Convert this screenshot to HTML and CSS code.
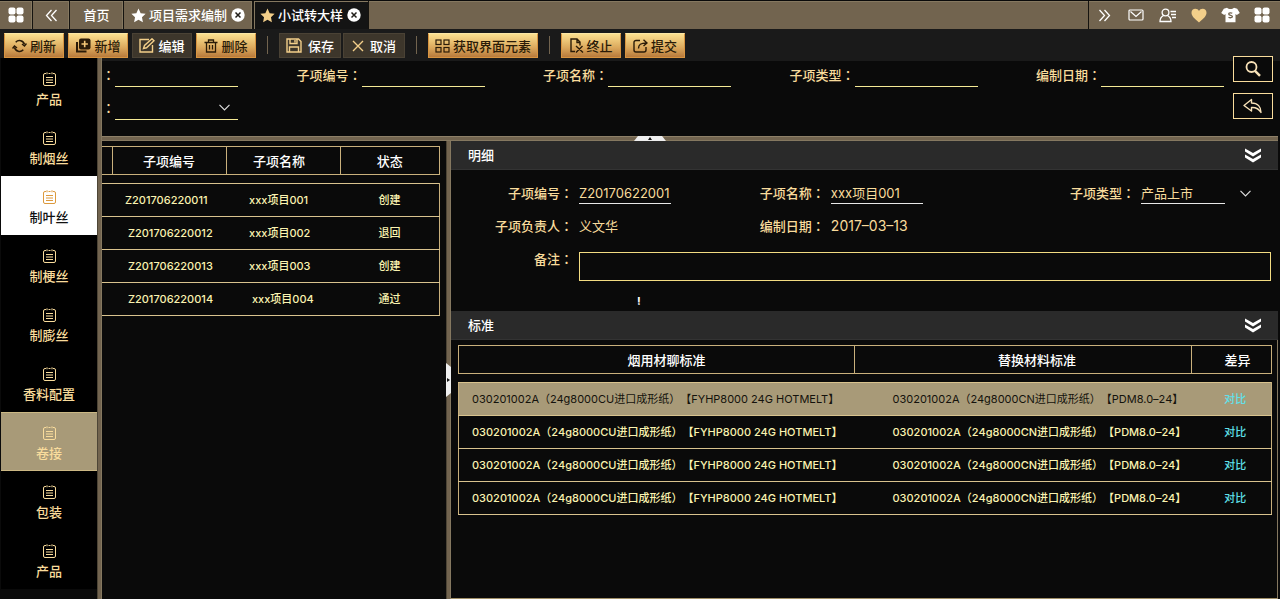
FILE: index.html
```html
<!DOCTYPE html>
<html lang="zh-CN">
<head>
    <meta charset="UTF-8">
    <meta name="viewport" content="width=device-width, initial-scale=1.0">
    <title>小试转大样</title>
    <link rel="stylesheet" href="styles.css">
</head>
<body>
    <!-- shared icons -->
    <svg class="sprite" aria-hidden="true">
        <symbol id="i-grid" viewBox="0 0 16 16"><rect x="0.5" y="0.5" width="7" height="7" rx="2"/><rect x="8.500" y="0.5" width="7" height="7" rx="2"/><rect x="0.5" y="8.500" width="7" height="7" rx="2"/><rect x="8.500" y="8.500" width="7" height="7" rx="2"/></symbol>
        <symbol id="i-star" viewBox="0 0 16 16"><path d="M8 .6l2.300 4.900 5.300.7-3.900 3.700 1 5.300L8 12.600l-4.700 2.600 1-5.300L.4 6.200l5.300-.7z"/></symbol>
        <symbol id="i-close" viewBox="0 0 14 14"><circle cx="7" cy="7" r="6.700" fill="#fff"/><path d="M4.500 4.500l5 5M9.500 4.500l-5 5" stroke="#221f1a" stroke-width="1.500" fill="none"/></symbol>
        <symbol id="i-list" viewBox="0 0 13 14"><path d="M3 1.500H2a1.500 1.500 0 0 0-1.500 1.500v9A1.500 1.500 0 0 0 2 13.500h9a1.500 1.500 0 0 0 1.500-1.500V3A1.500 1.500 0 0 0 11 1.500h-1M5.500 1.500h2M4 .3v2M9 .3v2M3 5.500h7M3 8h7M3 10.500h7" fill="none" stroke="currentColor"/></symbol>
        <symbol id="i-down2" viewBox="0 0 16 15"><path d="M0 0.5L8 5l8-4.500v3L8 8.500 0 3.500zM0 6.500L8 11l8-4.500v3l-8 5-8-5z" fill="#fff"/></symbol>
    </svg>

    <header class="topbar">
        <button class="top-cell cell-menu" aria-label="菜单"><svg width="16" height="16" fill="#fff"><use href="#i-grid"/></svg></button>
        <button class="top-cell cell-back" aria-label="向左"><svg width="13" height="13" viewBox="0 0 13 13" fill="none" stroke="#fff" stroke-width="1.300"><path d="M6.500 1L1.500 6.500l5 5.500M11.500 1l-5 5.500 5 5.500"/></svg></button>
        <button class="top-cell cell-home">首页</button>
        <div class="top-cell tab">
            <svg width="15" height="15" fill="#fff"><use href="#i-star"/></svg>
            <a href="#">项目需求编制</a>
            <button class="tab-close" aria-label="关闭"><svg width="14" height="14"><use href="#i-close"/></svg></button>
        </div>
        <div class="top-cell tab tab-active">
            <svg width="15" height="15" fill="#f3cf8a"><use href="#i-star"/></svg>
            <a href="#">小试转大样</a>
            <button class="tab-close" aria-label="关闭"><svg width="14" height="14"><use href="#i-close"/></svg></button>
        </div>
        <div class="top-icons">
            <button aria-label="向右"><svg width="13" height="13" viewBox="0 0 13 13" fill="none" stroke="#fff" stroke-width="1.300"><path d="M1.500 1l5 5.500-5 5.500M6.500 1l5 5.500-5 5.500"/></svg></button>
            <button aria-label="邮件"><svg width="16" height="12" viewBox="0 0 16 12" fill="none" stroke="#fff" stroke-width="1.200"><rect x="1" y="1" width="14" height="10" rx="1"/><path d="M2.500 2.500L8 7.500l5.500-5"/></svg></button>
            <button aria-label="用户"><svg width="18" height="15" viewBox="0 0 18 15" fill="none" stroke="#fff" stroke-width="1.300"><circle cx="6.500" cy="4.500" r="3.400"/><path d="M4.500 7.500C2.500 8.500 1 10 1 13.500h11c0-3.500-1.500-5-3.500-6M11.500 3.500H17M12 6.500h5M13 9.500h4"/></svg></button>
            <button aria-label="收藏"><svg width="16" height="15" viewBox="0 0 16 15" fill="#f3cf8a"><path d="M8 14.500C3.500 10.500.5 8 .5 4.700.5 2.300 2.200.7 4.300.7 6 .7 7.300 1.600 8 3 8.700 1.600 10 .7 11.700.7c2.100 0 3.800 1.600 3.800 4C15.500 8 12.500 10.500 8 14.500z"/></svg></button>
            <button aria-label="换肤"><svg width="19" height="16" viewBox="0 0 19 16"><path d="M6 .8c1.500 1.600 5.500 1.600 7 0l3.200 1L18.800 6l-3 1.900-1.300-1V15.300h-10V6.900l-1.300 1L.2 6l2.600-4.200z" fill="#fff"/><path d="M11.300 6.300c-1.200-.8-3.600-.6-3.600.7 0 1.700 3.700.9 3.700 2.600 0 1.300-2.500 1.500-3.900.6" fill="none" stroke="#72644f" stroke-width="1.300"/></svg></button>
            <button aria-label="应用"><svg width="16" height="16" fill="#fff"><use href="#i-grid"/></svg></button>
        </div>
    </header>

    <div class="toolbar">
        <button class="btn btn-gold"><svg width="15" height="14" viewBox="0 0 15 14" fill="none" stroke="currentColor" stroke-width="1.500"><path d="M2.500 8.500a5.200 5.200 0 0 0 8.800 2.300M12.500 5.500A5.200 5.200 0 0 0 3.700 3.200"/><path d="M.5 9.500l2-2.500 2.500 2M10 5l2.500 2 2-2.500"/></svg>刷新</button>
        <button class="btn btn-gold"><svg width="16" height="15" viewBox="0 0 16 15"><path d="M2 4v9.500h9.500" fill="none" stroke="currentColor" stroke-width="2"/><rect x="4" y=".5" width="11.500" height="11" rx="2" fill="currentColor"/><path d="M9.700 2.800v6.400M6.500 6h6.400" stroke="#f3c676" stroke-width="1.600"/></svg>新增</button>
        <button class="btn btn-dark"><svg width="16" height="15" viewBox="0 0 16 15" fill="none" stroke="#f3cf8a" stroke-width="1.400"><path d="M10 1.500H1v12.500h12.500V7M4.500 10.500l1-3L13 .8l2 2-7.500 7zM4.500 10.500l3-.7"/></svg>编辑</button>
        <button class="btn btn-gold"><svg width="14" height="14" viewBox="0 0 14 14" fill="none" stroke="currentColor" stroke-width="1.300"><path d="M.5 3.500h13M4.500 3.500V1h5v2.500M2.500 3.500V13h9V3.500M5.500 6v4.500M8.500 6v4.500"/></svg>删除</button>
        <span class="divider"></span>
        <button class="btn btn-dark btn-save"><svg width="16" height="15" viewBox="0 0 16 15" fill="none" stroke="#f3cf8a" stroke-width="1.400"><path d="M1 1h11.500L15 3.500V14H1zM4 1v4.500h7V1M3.500 14V9h9v5M9 2v2.500"/></svg>保存</button>
        <button class="btn btn-dark btn-cancel"><svg width="12" height="12" viewBox="0 0 12 12" stroke="#f3cf8a" stroke-width="1.400"><path d="M1 1l10 10M11 1L1 11"/></svg>取消</button>
        <span class="divider"></span>
        <button class="btn btn-gold"><svg width="15" height="14" viewBox="0 0 15 14" fill="none" stroke="currentColor" stroke-width="1.200"><rect x="1" y="1" width="5" height="4.500"/><rect x="9" y="1" width="5" height="4.500"/><rect x="1" y="8.500" width="5" height="4.500"/><rect x="9" y="8.500" width="5" height="4.500"/></svg>获取界面元素</button>
        <span class="divider"></span>
        <button class="btn btn-gold"><svg width="14" height="15" viewBox="0 0 14 15" fill="none" stroke="currentColor" stroke-width="1.400"><path d="M5 13.500H1V1h6l3 3v3.500M7 1v3.500h3M6 8l7 6.500M12.500 8L6 14.500"/></svg>终止</button>
        <button class="btn btn-gold"><svg width="15" height="14" viewBox="0 0 15 14" fill="none" stroke="currentColor" stroke-width="1.400"><path d="M7 1.500H3a2 2 0 0 0-2 2V11a2 2 0 0 0 2 2h8a2 2 0 0 0 2-2V8M5.500 9.500c0-4 2-5.500 8-5.500M10.500.8L14 4l-3.500 3"/></svg>提交</button>
    </div>

    <div class="page">
        <nav class="sidebar">
            <a href="#" class="side-item"><svg width="13" height="14"><use href="#i-list"/></svg>产品</a>
            <a href="#" class="side-item"><svg width="13" height="14"><use href="#i-list"/></svg>制烟丝</a>
            <a href="#" class="side-item side-white"><svg width="13" height="14"><use href="#i-list"/></svg>制叶丝</a>
            <a href="#" class="side-item"><svg width="13" height="14"><use href="#i-list"/></svg>制梗丝</a>
            <a href="#" class="side-item"><svg width="13" height="14"><use href="#i-list"/></svg>制膨丝</a>
            <a href="#" class="side-item"><svg width="13" height="14"><use href="#i-list"/></svg>香料配置</a>
            <a href="#" class="side-item side-current"><svg width="13" height="14"><use href="#i-list"/></svg>卷接</a>
            <a href="#" class="side-item"><svg width="13" height="14"><use href="#i-list"/></svg>包装</a>
            <a href="#" class="side-item"><svg width="13" height="14"><use href="#i-list"/></svg>产品</a>
        </nav>
        <div class="split-v"></div>

        <main class="main">
            <form class="query">
                <div class="query-fields">
                    <div class="field"><label for="q0"><span class="colon" lang="zh-TW">：</span></label><input type="text" id="q0"></div>
                    <div class="field"><label for="q1">子项编号<span class="colon" lang="zh-TW">：</span></label><input type="text" id="q1"></div>
                    <div class="field"><label for="q2">子项名称<span class="colon" lang="zh-TW">：</span></label><input type="text" id="q2"></div>
                    <div class="field"><label for="q3">子项类型<span class="colon" lang="zh-TW">：</span></label><input type="text" id="q3"></div>
                    <div class="field"><label for="q4">编制日期<span class="colon" lang="zh-TW">：</span></label><input type="text" id="q4"></div>
                    <div class="field"><label for="q5"><span class="colon" lang="zh-TW">：</span></label><select id="q5"><option></option></select></div>
                </div>
                <div class="query-actions">
                    <button type="button" aria-label="查询"><svg width="18" height="18" viewBox="0 0 18 18" fill="none" stroke="#f8e2b8"><circle cx="7.500" cy="7" r="5" stroke-width="1.800"/><path d="M11 10.800l5 5" stroke-width="2.400"/></svg></button>
                    <button type="button" aria-label="返回"><svg width="20" height="16" viewBox="0 0 20 16" fill="none" stroke="#f8e2b8" stroke-width="1.400" stroke-linejoin="round"><path d="M8.500 1.500L1 7.500l7.500 5.500V9.500c4.500-.3 7.500 1.500 9.500 5C18 9 15 5 8.500 5z"/></svg></button>
                </div>
            </form>
            <div class="split-h"><button class="handle-up" aria-label="收起查询"></button></div>

            <div class="work">
                <section class="list-panel">
                    <table class="grid list-grid">
                        <colgroup><col class="c-check"><col class="c-wide"><col class="c-wide"><col></colgroup>
                        <thead>
                            <tr><th></th><th>子项编号</th><th>子项名称</th><th>状态</th></tr>
                        </thead>
                        <tbody>
                            <tr><td></td><td>Z201706220011</td><td>xxx项目001</td><td>创建</td></tr>
                            <tr><td></td><td>&nbsp;Z201706220012</td><td>xxx项目002</td><td>退回</td></tr>
                            <tr><td></td><td>&nbsp;Z201706220013</td><td>xxx项目003</td><td>创建</td></tr>
                            <tr><td></td><td>&nbsp;Z201706220014</td><td>&nbsp;xxx项目004</td><td>通过</td></tr>
                        </tbody>
                    </table>
                </section>
                <div class="split-v"><button class="handle-right" aria-label="展开列表"></button></div>

                <section class="detail-panel">
                    <div class="panel-head"><h2>明细</h2><button aria-label="折叠"><svg width="16" height="15"><use href="#i-down2"/></svg></button></div>
                    <form class="detail">
                        <label for="d1">子项编号<span class="colon" lang="zh-TW">：</span></label>
                        <input type="text" id="d1" value="Z20170622001">
                        <label for="d2">子项名称<span class="colon" lang="zh-TW">：</span></label>
                        <input type="text" id="d2" value="xxx项目001">
                        <label for="d3">子项类型<span class="colon" lang="zh-TW">：</span></label>
                        <div class="select-box">
                            <select id="d3"><option>产品上市</option></select>
                            <svg width="11" height="7" viewBox="0 0 11 7" fill="none" stroke="#ddd" stroke-width="1.200"><path d="M.5.8l5 5 5-5"/></svg>
                        </div>
                        <span class="label">子项负责人<span class="colon" lang="zh-TW">：</span></span>
                        <span class="value">义文华</span>
                        <span class="label">编制日期<span class="colon" lang="zh-TW">：</span></span>
                        <span class="value date">2017–03–13</span>
                        <label for="d4" class="note-label">备注<span class="colon" lang="zh-TW">：</span></label>
                        <input type="text" id="d4" class="note">
                        <p class="hint">!</p>
                    </form>
                    <div class="panel-head"><h2>标准</h2><button aria-label="折叠"><svg width="16" height="15"><use href="#i-down2"/></svg></button></div>
                    <div class="standard">
                        <table class="grid std-grid">
                            <colgroup><col class="c-from"><col class="c-to"><col></colgroup>
                            <thead>
                                <tr><th>烟用材聊标准</th><th>替换材料标准</th><th>差异</th></tr>
                            </thead>
                            <tbody>
                                <tr class="selected"><td>030201002A（24g8000CU进口成形纸）【FYHP8000 24G HOTMELT】</td><td>030201002A（24g8000CN进口成形纸）【PDM8.0–24】</td><td><a href="#">对比</a></td></tr>
                                <tr><td>030201002A（24g8000CU进口成形纸）【FYHP8000 24G HOTMELT】</td><td>030201002A（24g8000CN进口成形纸）【PDM8.0–24】</td><td><a href="#">对比</a></td></tr>
                                <tr><td>030201002A（24g8000CU进口成形纸）【FYHP8000 24G HOTMELT】</td><td>030201002A（24g8000CN进口成形纸）【PDM8.0–24】</td><td><a href="#">对比</a></td></tr>
                                <tr><td>030201002A（24g8000CU进口成形纸）【FYHP8000 24G HOTMELT】</td><td>030201002A（24g8000CN进口成形纸）【PDM8.0–24】</td><td><a href="#">对比</a></td></tr>
                            </tbody>
                        </table>
                    </div>
                </section>
            </div>
        </main>
    </div>
</body>
</html>
```

FILE: styles.css
```css
* {
    box-sizing: border-box;
}

body {
    margin: 0;
    min-height: 100vh;
    display: flex;
    flex-direction: column;
    background: #0a0a0a;
    color: #f9dc9c;
    font-family: Inter, "Noto Sans CJK SC", sans-serif;
    font-size: 13px;
    line-height: 18px;
}

button, input, select {
    font: inherit;
    color: inherit;
    margin: 0;
    padding: 0;
    border: 0;
    border-radius: 0;
    background: none;
    outline: none;
}

button {
    cursor: pointer;
}

a {
    color: inherit;
    text-decoration: none;
}

svg {
    display: block;
    flex: none;
}

.sprite {
    position: absolute;
    width: 0;
    height: 0;
}

/* Top bar */
.topbar {
    display: flex;
    height: 29px;
    background: #72644f;
    border-top: 1px solid #0a0a0a;
    color: #fff;
    font-weight: 500;
    box-shadow: inset 0 1px #857860;
}

.top-cell {
    display: flex;
    align-items: center;
    justify-content: center;
    border-right: 1px solid #15130f;
    box-shadow: inset -1px 1px #857860;
}

.cell-menu {
    width: 33px;
}

.cell-back {
    width: 37px;
}

.cell-home {
    width: 54px;
}

.tab {
    padding: 0 7px;
    gap: 3px;
}

.tab-active {
    background: #141414;
    box-shadow: inset 1px 0 #15130f, inset 2px 1px #857860;
}

.tab-close {
    margin-left: 1px;
}

.top-icons {
    display: flex;
    width: 192px;
    margin-left: auto;
    padding-right: 2px;
    border-left: 1px solid #15130f;
}

.top-icons button {
    flex: 1;
    display: flex;
    align-items: center;
    justify-content: center;
}

/* Toolbar */
.toolbar {
    display: flex;
    align-items: flex-start;
    gap: 4px;
    height: 29px;
    padding: 4px 4px 0;
    background: #1a1a1a;
}

.btn {
    display: flex;
    align-items: center;
    justify-content: center;
    gap: 3px;
    min-width: 60px;
    height: 25px;
    padding: 0 6px;
    font-weight: 500;
    white-space: nowrap;
}

.btn-gold {
    color: #2a1b08;
    background: linear-gradient(#fce08f, #dba85c 60%, #b87a3c);
    border: 1px solid #d89440;
    border-top-color: #fbe7a6;
}

.btn-dark {
    color: #fff;
    background: #3d362b;
    border: 1px solid #4a4235;
}

.btn-save {
    gap: 6px;
}

.btn-cancel {
    gap: 6px;
    min-width: 62px;
    margin-left: -2px;
}

.divider {
    width: 1px;
    height: 18px;
    margin: 3px 7px 0;
    background: #72644f;
}

/* Page frame */
.page {
    flex: 1;
    display: flex;
}

.sidebar {
    width: 96px;
    margin-left: 1px;
    background: #0a0a0a;
}

.side-item {
    display: flex;
    flex-direction: column;
    align-items: center;
    gap: 4px;
    height: 59px;
    padding-top: 14px;
    background: #000;
    font-weight: 500;
}

.side-white {
    background: #fff;
    color: #111;
}

.side-white svg {
    color: #dc9a3e;
}

.side-current {
    background: #a89a78;
    box-shadow: inset 0 1px #cbb884, inset 0 -1px #cbb884;
}

.split-v {
    position: relative;
    flex: none;
    width: 5px;
    background: #72644f;
    border-left: 1px solid #4d4536;
    border-right: 1px solid #857860;
}

.main {
    flex: 1;
    min-width: 0;
    display: flex;
    flex-direction: column;
}

.split-h {
    position: relative;
    height: 5px;
    margin-right: 2px;
    background: #72644f;
    border-top: 1px solid #8e8068;
    border-bottom: 1px solid #857860;
}

.handle-up {
    position: absolute;
    top: -1px;
    left: calc(50% - 56px);
    width: 32px;
    height: 5px;
    background: #eee;
    clip-path: polygon(4px 0, 28px 0, 100% 100%, 0 100%);
}

.handle-up::after {
    content: "";
    position: absolute;
    left: 14px;
    top: 1px;
    border: 2px solid transparent;
    border-top: 0;
    border-bottom: 3px solid #111;
}

.handle-right {
    position: absolute;
    left: -1px;
    top: calc(50% - 7px);
    width: 5px;
    height: 34px;
    background: #eee;
    clip-path: polygon(0 0, 100% 4px, 100% 30px, 0 100%);
}

.handle-right::after {
    content: "";
    position: absolute;
    left: 1px;
    top: 15px;
    border: 2px solid transparent;
    border-right: 0;
    border-left: 3px solid #111;
}

/* Query form */
.query {
    display: flex;
    gap: 9px;
    padding: 1px 7px 16px 0;
    border-top: 3px solid #1a1a1a;
}

.query-fields {
    flex: 1;
    display: grid;
    grid-template-columns: 136px repeat(4, 1fr);
    row-gap: 8px;
}

.field {
    display: flex;
    align-items: center;
    justify-content: flex-end;
}

.field input, .field select {
    width: 123px;
    height: 25px;
    border-bottom: 1px solid #f5ea96;
}

select {
    appearance: none;
    cursor: pointer;
}

.field select {
    background: url("data:image/svg+xml,%3Csvg xmlns='http://www.w3.org/2000/svg' width='11' height='7' fill='none' stroke='%23ddd' stroke-width='1.2'%3E%3Cpath d='M.5.8l5 5 5-5'/%3E%3C/svg%3E") no-repeat right 8px center;
}

label, .label {
    font-weight: 500;
    white-space: nowrap;
}

/* the traditional glyph sits in the middle of its box */
.colon {
    font-family: "Noto Sans CJK TC", sans-serif;
    line-height: 1;
    text-spacing-trim: space-all;
}

.query-actions {
    display: flex;
    flex-direction: column;
    gap: 11px;
    margin: -6px 0 -1px;
}

.query-actions button {
    display: flex;
    align-items: center;
    justify-content: center;
    width: 40px;
    height: 26px;
    border: 1px solid #f9dc9c;
    background: #0a0a0a;
}

/* Work area */
.work {
    flex: 1;
    display: flex;
    padding-right: 2px;
}

.list-panel {
    width: 344px;
    padding: 5px 6px 0 0;
}

.grid {
    width: 100%;
    table-layout: fixed;
    border-collapse: collapse;
    font-size: 11px;
    font-weight: 500;
    color: #faf3b0;
    text-spacing-trim: space-all;
}

.grid th {
    height: 28px;
    padding: 0;
    border: 1px solid #c9b07c;
    color: #fff;
    font-size: 13px;
    font-weight: 500;
}

.grid td {
    height: 33px;
    padding: 0;
    border-top: 1px solid #d9c38e;
    border-bottom: 1px solid #d9c38e;
    white-space: nowrap;
}

.grid td:last-child {
    border-right: 1px solid #c9b07c;
    text-align: center;
}

/* space between header and rows */
.grid tbody::before {
    content: "";
    display: block;
    height: 8px;
}

.list-grid th:first-child {
    border-left: 0;
}

.list-grid th:nth-child(3) {
    padding-right: 8px;
}

.list-grid td:nth-child(2) {
    padding-left: 13px;
}

.list-grid td:nth-child(3) {
    padding-left: 23px;
}

.c-check {
    width: 10px;
}

.c-wide {
    width: 114px;
}

.detail-panel {
    flex: 1;
    min-width: 0;
    display: flex;
    flex-direction: column;
}

.panel-head {
    display: flex;
    align-items: center;
    justify-content: space-between;
    height: 29px;
    padding: 0 17px;
    background: #2a2a2a;
    border-bottom: 1px solid #333;
}

.panel-head h2 {
    margin: 0;
    color: #fff;
    font-size: 13px;
    font-weight: 500;
}

.detail {
    display: grid;
    grid-template-columns: 122px 3fr 65px 4fr 65px 130px;
    grid-template-rows: 22px 22px 33px 18px;
    gap: 11px 6px;
    align-items: center;
    padding: 12px 7px 1px 0;
}

.detail label, .label {
    text-align: right;
}

.detail input, .detail select {
    width: 92px;
    height: 22px;
    border-bottom: 1px solid #e8e8e8;
}

.select-box {
    display: flex;
    align-items: center;
    gap: 15px;
}

.detail .select-box select {
    width: 84px;
}

.date {
    grid-column: span 3;
    font-size: 14px;
}

.detail .note-label {
    align-self: start;
    padding-top: 2px;
}

.detail .note {
    grid-column: span 5;
    align-self: end;
    width: 100%;
    height: 29px;
    border: 1px solid #f3dc82;
}

.hint {
    grid-column: 2;
    margin: 0;
    padding-left: 58px;
    color: #fff;
    font-size: 11px;
    font-weight: 700;
}

.standard {
    flex: 1;
    padding: 5px 5px 0 7px;
    border-right: 1px solid #857860;
    border-bottom: 1px solid #a08f68;
}

.c-from {
    width: 396px;
}

.c-to {
    width: 337px;
}

.std-grid th:first-child, .std-grid td:first-child {
    border-left: 1px solid #c9b07c;
}

.std-grid th:nth-child(1) {
    padding-left: 20px;
}

.std-grid th:nth-child(2) {
    padding-left: 28px;
}

.std-grid th:nth-child(3) {
    padding-left: 12px;
}

.std-grid td:nth-child(1) {
    padding-left: 13px;
}

.std-grid td:nth-child(2) {
    padding-left: 38px;
}

.std-grid td:last-child {
    padding-left: 8px;
}

.std-grid a {
    color: #5fe0ea;
    font-weight: 500;
}

.selected {
    background: #a89a78;
    color: #14120c;
    font-weight: 400;
}
```
